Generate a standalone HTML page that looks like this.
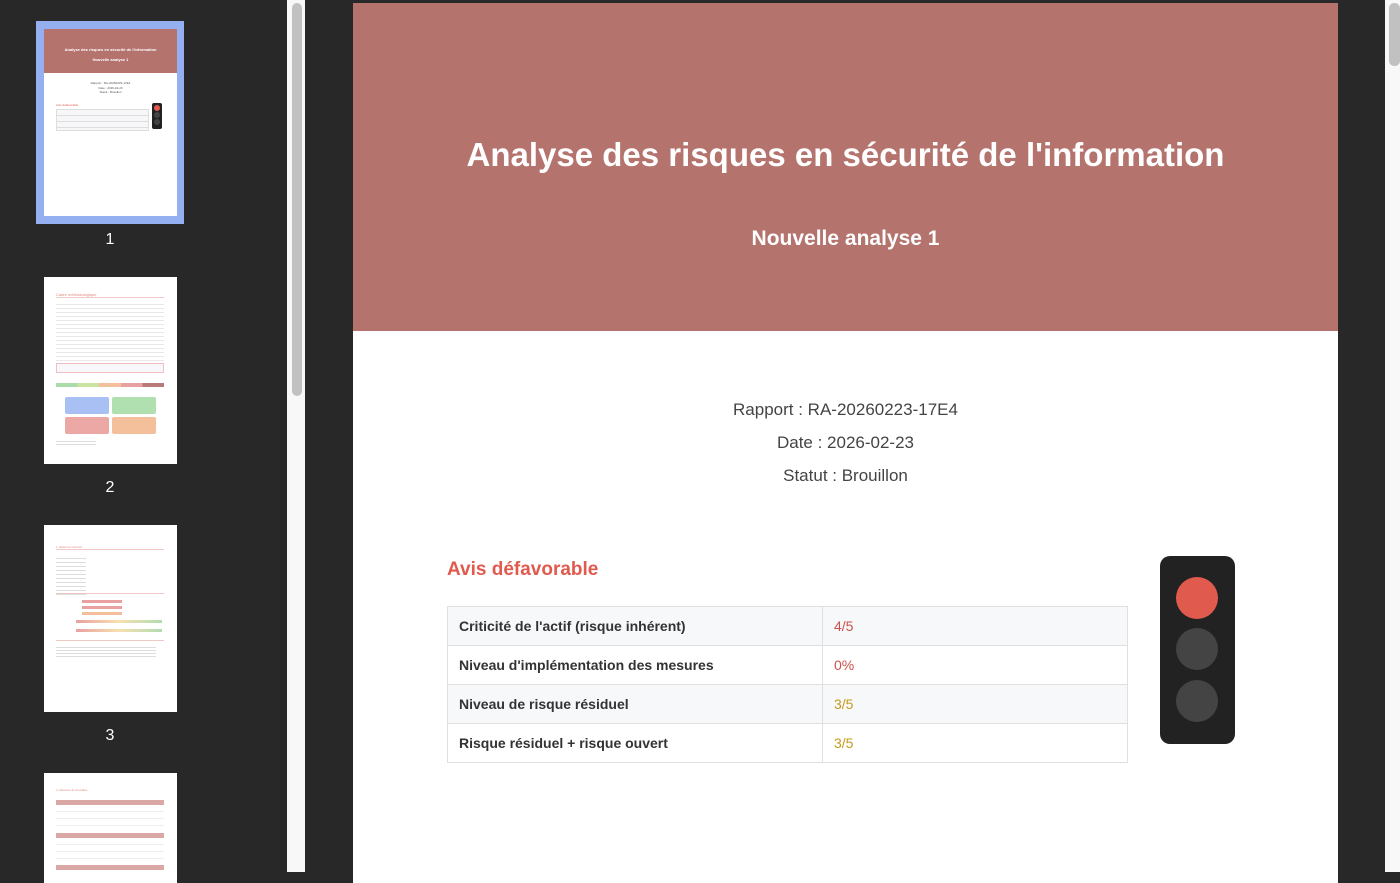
<!DOCTYPE html>
<html><head><meta charset="utf-8"><style>
*{margin:0;padding:0;box-sizing:border-box}
body{width:1400px;height:872px;overflow:hidden;background:#282828;font-family:"Liberation Sans",Arial,sans-serif;position:relative}
.abs{position:absolute}
.th{background:#fff;position:absolute;overflow:hidden}
.ln{position:absolute;height:1px;background:#ddd}
.num{position:absolute;color:#fff;font-size:16px;width:40px;text-align:center}
table{border-collapse:collapse}
td{border:1px solid #e0e0e0;height:39px;font-size:14px}
</style></head><body>
<div class="abs" style="left:287px;top:0;width:18px;height:872px;background:#f8f8f8"></div>
<div class="abs" style="left:292px;top:3px;width:10px;height:393px;background:#c1c1c1;border-radius:5px"></div>
<div class="abs" style="left:1385px;top:0;width:15px;height:872px;background:#f8f8f8"></div>
<div class="abs" style="left:1389px;top:3px;width:11px;height:63px;background:#c1c1c1;border-radius:5px"></div>

<div class="abs" style="left:36px;top:21px;width:148px;height:203px;background:#94b0f0"></div>
<div class="th" style="left:44px;top:29px;width:133px;height:187px">
 <div class="abs" style="left:0;top:0;width:133px;height:44px;background:#b5736e;color:#fff;font-size:4px;font-weight:bold;text-align:center;padding-top:18px">Analyse des risques en sécurité de l'information<br><br>Nouvelle analyse 1</div>
 <div class="abs" style="left:0;top:52px;width:133px;text-align:center;font-size:3px;color:#555;line-height:4.5px">Rapport : RA-20260223-17E4<br>Date : 2026-02-23<br>Statut : Brouillon</div>
 <div class="abs" style="left:12px;top:74px;font-size:3px;color:#e05a4e">Avis défavorable</div>
 <div class="abs" style="left:12px;top:80px;width:93px;height:22px;border:1px solid #ddd;background:repeating-linear-gradient(#f7f7f9 0 5px,#ddd 5px 6px)"></div>
 <div class="abs" style="left:108px;top:74px;width:10px;height:26px;background:#222;border-radius:2px"></div>
 <div class="abs" style="left:110px;top:76px;width:6px;height:6px;background:#e05a4e;border-radius:50%"></div>
 <div class="abs" style="left:110px;top:83px;width:6px;height:6px;background:#444;border-radius:50%"></div>
 <div class="abs" style="left:110px;top:90px;width:6px;height:6px;background:#444;border-radius:50%"></div>
</div>
<div class="num" style="left:90px;top:231px">1</div>

<div class="th" style="left:44px;top:277px;width:133px;height:187px">
 <div class="abs" style="left:12px;top:15px;font-size:4px;color:#e08a84">Cadre méthodologique</div>
 <div class="ln" style="left:12px;top:20px;width:108px;background:#f0c8c4"></div>
 <div class="abs" style="left:12px;top:24px;width:108px;height:60px;background:repeating-linear-gradient(#fff 0 3px,#e8e8e8 3px 4px)"></div>
 <div class="abs" style="left:12px;top:86px;width:108px;height:10px;border:1px solid #f0c0c0;background:#f8f8fc"></div>
 <div class="abs" style="left:12px;top:106px;width:108px;height:4px;background:linear-gradient(90deg,#a8dca8 20%,#c8e4a0 20% 40%,#f4c09c 40% 60%,#e8a0a0 60% 80%,#b87a78 80%)"></div>
 <div class="abs" style="left:21px;top:120px;width:44px;height:17px;background:#a8c0f4;border-radius:2px"></div>
 <div class="abs" style="left:68px;top:120px;width:44px;height:17px;background:#b0e0b0;border-radius:2px"></div>
 <div class="abs" style="left:21px;top:140px;width:44px;height:17px;background:#eca8a4;border-radius:2px"></div>
 <div class="abs" style="left:68px;top:140px;width:44px;height:17px;background:#f4c09c;border-radius:2px"></div>
 <div class="abs" style="left:12px;top:162px;width:40px;height:8px;background:repeating-linear-gradient(#fff 0 2px,#ddd 2px 3px)"></div>
</div>
<div class="num" style="left:90px;top:479px">2</div>

<div class="th" style="left:44px;top:525px;width:133px;height:187px">
 <div class="abs" style="left:12px;top:20px;font-size:3px;color:#e08a84">1. Résumé exécutif</div>
 <div class="ln" style="left:12px;top:24px;width:108px;background:#f0c8c4"></div>
 <div class="abs" style="left:12px;top:30px;width:30px;height:40px;background:repeating-linear-gradient(#fff 0 3px,#ddd 3px 4px)"></div>
 <div class="ln" style="left:12px;top:68px;width:108px;background:#f0c8c4"></div>
 <div class="abs" style="left:38px;top:75px;width:40px;height:3px;background:#e8a0a0"></div>
 <div class="abs" style="left:38px;top:81px;width:40px;height:3px;background:#e8a0a0"></div>
 <div class="abs" style="left:38px;top:87px;width:40px;height:3px;background:#f4c09c"></div>
 <div class="abs" style="left:32px;top:95px;width:86px;height:3px;background:linear-gradient(90deg,#e8a0a0,#f8e0b0,#b0dcb0)"></div>
 <div class="abs" style="left:32px;top:104px;width:86px;height:3px;background:linear-gradient(90deg,#e8a0a0,#f8e0b0,#b0dcb0)"></div>
 <div class="ln" style="left:12px;top:115px;width:108px;background:#f0c8c4"></div>
 <div class="abs" style="left:12px;top:120px;width:100px;height:12px;background:repeating-linear-gradient(#fff 0 2px,#ddd 2px 3px)"></div>
</div>
<div class="num" style="left:90px;top:727px">3</div>

<div class="th" style="left:44px;top:773px;width:133px;height:110px">
 <div class="abs" style="left:12px;top:15px;font-size:3px;color:#e08a84">4. Mesures &amp; Contrôles</div>
 <div class="abs" style="left:12px;top:27px;width:108px;height:5px;background:#d9a8a4"></div>
 <div class="abs" style="left:12px;top:32px;width:108px;height:26px;background:repeating-linear-gradient(#fff 0 6px,#eee 6px 7px)"></div>
 <div class="abs" style="left:12px;top:60px;width:108px;height:5px;background:#d9a8a4"></div>
 <div class="abs" style="left:12px;top:65px;width:108px;height:26px;background:repeating-linear-gradient(#fff 0 6px,#eee 6px 7px)"></div>
 <div class="abs" style="left:12px;top:92px;width:108px;height:5px;background:#d9a8a4"></div>
</div>

<div class="abs" style="left:353px;top:3px;width:985px;height:880px;background:#fff">
 <div style="height:328px;background:#b5736e;color:#fff;text-align:center">
  <div style="padding-top:133px;font-size:33px;font-weight:bold">Analyse des risques en sécurité de l'information</div>
  <div style="margin-top:53px;font-size:21px;font-weight:bold">Nouvelle analyse 1</div>
 </div>
 <div style="text-align:center;color:#444;font-size:17px;line-height:33px;padding-top:62px">Rapport : RA-20260223-17E4<br>Date : 2026-02-23<br>Statut : Brouillon</div>
 <div class="abs" style="left:94px;top:556px;font-size:19px;font-weight:bold;color:#e05a4e">Avis défavorable</div>
 <table class="abs" style="left:94px;top:603px;width:681px">
  <tr style="background:#f7f8fa"><td style="width:375px;padding-left:11px;font-weight:bold;color:#333">Criticité de l'actif (risque inhérent)</td><td style="padding-left:11px;color:#c9524a">4/5</td></tr>
  <tr><td style="padding-left:11px;font-weight:bold;color:#333">Niveau d'implémentation des mesures</td><td style="padding-left:11px;color:#c9524a">0%</td></tr>
  <tr style="background:#f7f8fa"><td style="padding-left:11px;font-weight:bold;color:#333">Niveau de risque résiduel</td><td style="padding-left:11px;color:#c49a1c">3/5</td></tr>
  <tr><td style="padding-left:11px;font-weight:bold;color:#333">Risque résiduel + risque ouvert</td><td style="padding-left:11px;color:#c49a1c">3/5</td></tr>
 </table>
 <div class="abs" style="left:807px;top:553px;width:75px;height:188px;background:#222;border-radius:10px">
  <div class="abs" style="left:16px;top:21px;width:42px;height:42px;border-radius:50%;background:#e05a4e"></div>
  <div class="abs" style="left:16px;top:72px;width:42px;height:42px;border-radius:50%;background:#444"></div>
  <div class="abs" style="left:16px;top:124px;width:42px;height:42px;border-radius:50%;background:#444"></div>
 </div>
</div>
</body></html>
